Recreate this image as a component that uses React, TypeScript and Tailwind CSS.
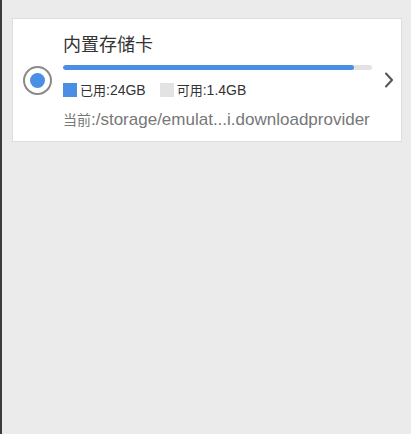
import React from "react";

export default function App() {
  return (
    <div
      className="w-[411px] h-[434px] bg-[#ebebeb] border-l-2 border-[#3c3c3c] pt-[18px] pl-[10px] pr-[9px]"
      style={{ fontFamily: '"Liberation Sans", "Noto Sans CJK SC", sans-serif' }}
    >
      <div className="h-[124px] bg-white border border-[#dddddd] flex items-center">
        <div className="ml-[10px] w-[29px] h-[29px] rounded-full border-2 border-[#8a8a8a] flex items-center justify-center shrink-0">
          <div className="w-[15px] h-[15px] rounded-full bg-[#4a8fe3]" />
        </div>
        <div className="ml-[11px] w-[309px] self-start pt-[15px] flex flex-col">
          <div className="text-[18px] leading-[22px] text-[#333333]">内置存储卡</div>
          <div className="mt-[9px] h-[5px] w-full rounded-full bg-[#e3e3e3] overflow-hidden">
            <div className="h-full w-[291px] bg-[#4a8fe3] rounded-full" />
          </div>
          <div className="mt-[13px] flex items-center h-[14px] text-[14px] leading-[14px] text-[#333333]">
            <div className="w-[14px] h-[14px] bg-[#4a8fe3]" />
            <span className="ml-[3px]">
              <span className="text-[13px]">已用</span>:24GB
            </span>
            <div className="ml-[14px] w-[14px] h-[14px] bg-[#e3e3e3]" />
            <span className="ml-[3px]">
              <span className="text-[13px]">可用</span>:1.4GB
            </span>
          </div>
          <div className="mt-[13px] text-[17px] leading-[20px] text-[#777777] whitespace-nowrap">
            <span className="text-[14px]">当前</span>:/storage/emulat...i.downloadprovider
          </div>
        </div>
        <div className="ml-[12px] flex items-center">
          <svg width="10" height="16" viewBox="0 0 10 16" fill="none">
            <path d="M2 1.5 L8 8 L2 14.5" stroke="#555555" strokeWidth="2" strokeLinecap="round" strokeLinejoin="round" />
          </svg>
        </div>
      </div>
    </div>
  );
}
